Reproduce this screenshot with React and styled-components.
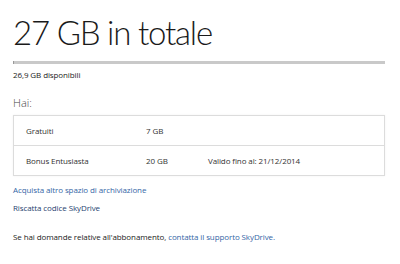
import React from 'react';
import styled, { createGlobalStyle } from 'styled-components';

const rows = [
  { name: 'Gratuiti', size: '7 GB', note: '' },
  { name: 'Bonus Entusiasta', size: '20 GB', note: 'Valido fino al: 21/12/2014' },
];

const App = () => {
  return (
    <>
      <GlobalStyle />
      <Page>
        <Title>27 GB in totale</Title>
        <UsageBar>
          <UsageFill style={{ width: `${(0.1 / 27) * 100}%` }} />
        </UsageBar>
        <Available>26,9 GB disponibili</Available>

        <SectionLabel>Hai:</SectionLabel>
        <PlanTable>
          {rows.map((row) => (
            <PlanRow key={row.name}>
              <Cell>{row.name}</Cell>
              <Cell>{row.size}</Cell>
              <Cell>{row.note}</Cell>
            </PlanRow>
          ))}
        </PlanTable>

        <Links>
          <Link>Acquista altro spazio di archiviazione</Link>
          <Link dark>Riscatta codice SkyDrive</Link>
        </Links>

        <Footer>
          Se hai domande relative all'abbonamento, <Link as="span">contatta il supporto SkyDrive.</Link>
        </Footer>
      </Page>
    </>
  );
};

const GlobalStyle = createGlobalStyle`
  html, body {
    margin: 0;
    padding: 0;
    background: #fff;
  }
  body {
    font-family: "Open Sans", "Liberation Sans", sans-serif;
    color: #222;
  }
`;

const Page = styled.div`
  width: 372px;
  padding: 12px 15px 0 13px;
  display: flex;
  flex-direction: column;
`;

const Title = styled.h1`
  margin: 0;
  font-family: Lato, "Open Sans", sans-serif;
  font-size: 33px;
  font-weight: 300;
  line-height: 40px;
  letter-spacing: -1.2px;
  color: #1a1a1a;
`;

const UsageBar = styled.div`
  margin-top: 9px;
  height: 3px;
  background: #c9c9c9;
`;

const UsageFill = styled.div`
  height: 100%;
  background: #9a9a9a;
`;

const Available = styled.div`
  margin-top: 5px;
  font-size: 8px;
  line-height: 12px;
  letter-spacing: -0.1px;
  color: #222;
`;

const SectionLabel = styled.div`
  margin-top: 15px;
  font-size: 11px;
  font-weight: 300;
  line-height: 14px;
  color: #444;
`;

const PlanTable = styled.div`
  margin-top: 5px;
  border: 1px solid #dcdcdc;
  box-shadow: 0 0 2px rgba(0, 0, 0, 0.06);
  display: flex;
  flex-direction: column;
`;

const PlanRow = styled.div`
  height: 29px;
  display: grid;
  grid-template-columns: 120px 62px 1fr;
  align-items: center;
  padding-left: 12px;
  & + & {
    border-top: 1px solid #dcdcdc;
  }
`;

const Cell = styled.div`
  font-size: 8px;
  letter-spacing: -0.1px;
  color: #333;
`;

const Links = styled.div`
  margin-top: 8px;
  display: flex;
  flex-direction: column;
  gap: 6px;
`;

const Link = styled.a`
  font-size: 8px;
  line-height: 12px;
  letter-spacing: -0.1px;
  color: ${(props) => (props.dark ? '#1f3f70' : '#3566a6')};
  cursor: pointer;
`;

const Footer = styled.div`
  margin-top: 17px;
  font-size: 8px;
  line-height: 12px;
  letter-spacing: -0.1px;
  color: #222;
`;

export default App;
